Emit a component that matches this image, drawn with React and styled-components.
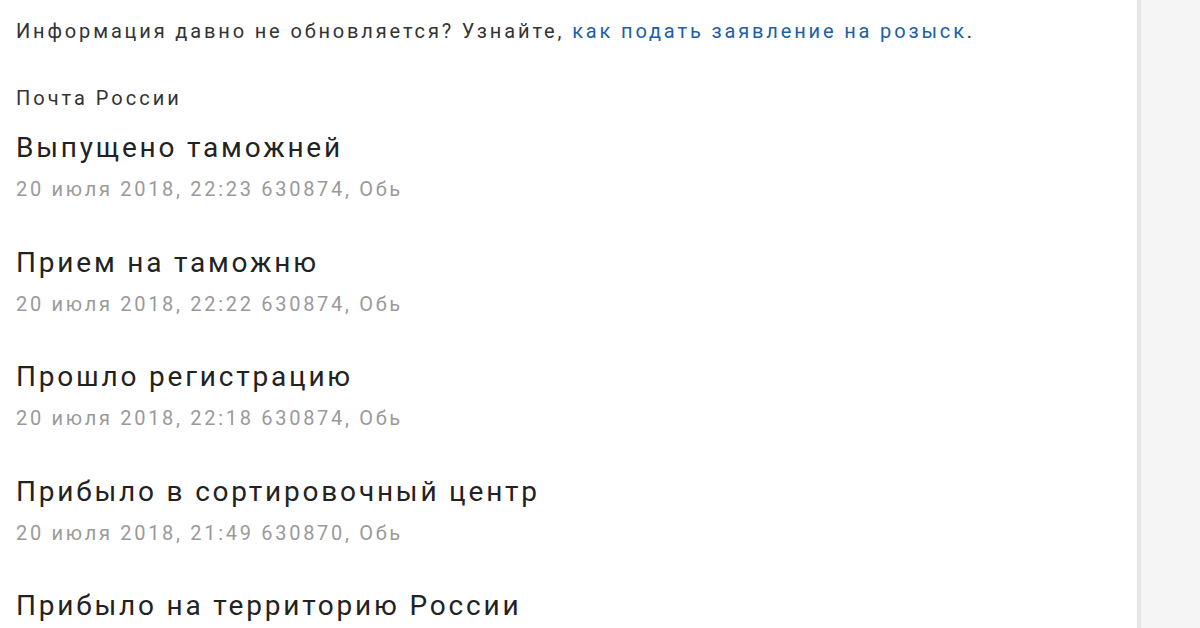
import React from 'react';
import styled, { createGlobalStyle } from 'styled-components';

const GlobalStyle = createGlobalStyle`
  html, body {
    margin: 0;
    padding: 0;
    background: #fff;
    font-family: Roboto, "Noto Sans", sans-serif;
  }
`;

const Page = styled.div`
  display: flex;
  width: 1200px;
  height: 628px;
  overflow: hidden;
`;

const Main = styled.main`
  width: 1141px;
  flex-shrink: 0;
  box-sizing: border-box;
  padding: 16px 16px 0 16px;
  border-right: 4px solid #e5e5e5;
  background: #fff;
`;

const Aside = styled.aside`
  flex: 1;
  background: #f5f5f5;
`;

const Notice = styled.p`
  margin: 0;
  font-size: 20px;
  line-height: 30px;
  letter-spacing: 2.85px;
  color: #333;
`;

const NoticeLink = styled.a`
  color: #1d5ea6;
  text-decoration: none;
`;

const Carrier = styled.div`
  margin-top: 39px;
  font-size: 20px;
  line-height: 26px;
  letter-spacing: 3px;
  color: #333;
`;

const EventList = styled.ul`
  list-style: none;
  margin: 15px 0 0 0;
  padding: 0;
`;

const Event = styled.li`
  padding-top: 2px;
  margin-bottom: 36.5px;
`;

const Title = styled.div`
  font-size: 28px;
  line-height: 40px;
  letter-spacing: 2.8px;
  color: #222;
`;

const Meta = styled.div`
  margin-top: 6px;
  font-size: 20px;
  line-height: 30px;
  letter-spacing: 2.7px;
  color: #9a9a9a;
`;

const events = [
  { title: 'Выпущено таможней', meta: '20 июля 2018, 22:23 630874, Обь' },
  { title: 'Прием на таможню', meta: '20 июля 2018, 22:22 630874, Обь' },
  { title: 'Прошло регистрацию', meta: '20 июля 2018, 22:18 630874, Обь' },
  { title: 'Прибыло в сортировочный центр', meta: '20 июля 2018, 21:49 630870, Обь' },
  { title: 'Прибыло на территорию России', meta: '20 июля 2018, 21:05 630870, Обь' },
];

const App = () => {
  return (
    <>
      <GlobalStyle />
      <Page>
        <Main>
          <Notice>
            Информация давно не обновляется? Узнайте,{' '}
            <NoticeLink href="#">как подать заявление на розыск</NoticeLink>.
          </Notice>
          <Carrier>Почта России</Carrier>
          <EventList>
            {events.map((ev) => (
              <Event key={ev.meta + ev.title}>
                <Title>{ev.title}</Title>
                <Meta>{ev.meta}</Meta>
              </Event>
            ))}
          </EventList>
        </Main>
        <Aside />
      </Page>
    </>
  );
};

export default App;
